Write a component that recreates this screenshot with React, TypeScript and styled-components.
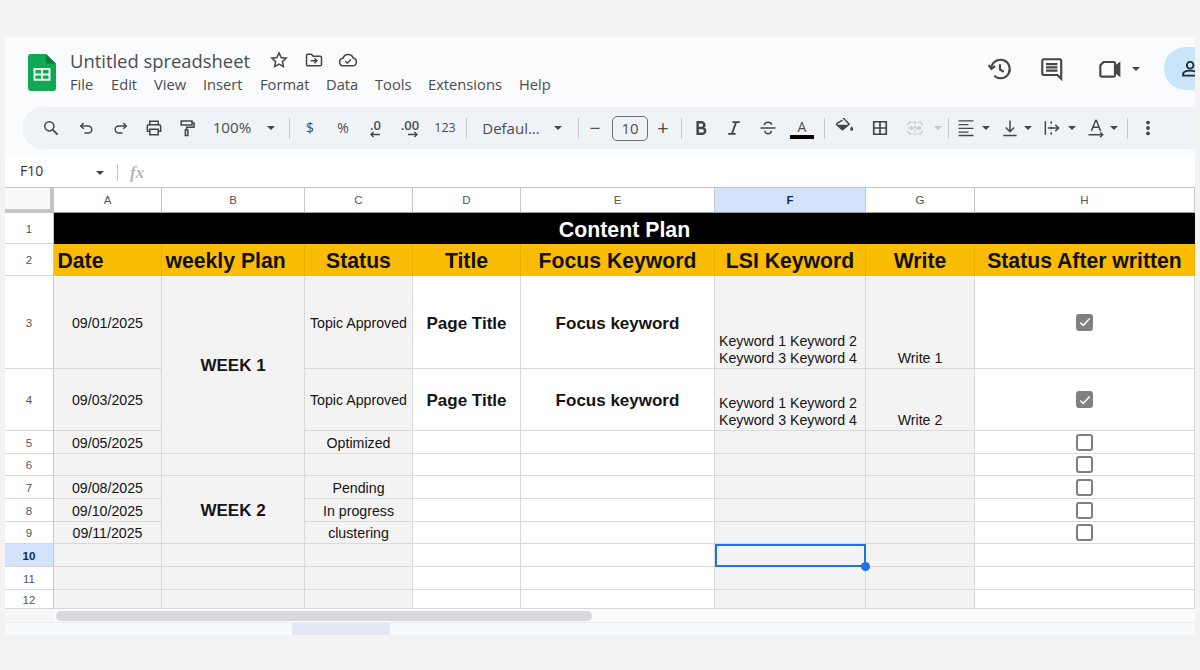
import React from "react";
import styled, { createGlobalStyle } from "styled-components";

const Global = createGlobalStyle`
  html, body { margin: 0; padding: 0; background: #f4f3f1; }
  body { width: 1200px; height: 670px; overflow: hidden; font-family: "Roboto", "Liberation Sans", sans-serif; }
`;

const Page = styled.div`
  box-sizing: border-box;
  width: 1200px;
  height: 670px;
  padding: 37px 5px 35px;
  background: #f4f3f1;
`;
const Window = styled.div`
  width: 1190px;
  height: 598px;
  display: flex;
  flex-direction: column;
  overflow: hidden;
  background: #fafbfd;
`;
const Header = styled.header`
  height: 70px;
  flex: none;
  display: flex;
  align-items: flex-start;
  padding-left: 23px;
  box-sizing: border-box;
`;
const Logo = styled.svg`
  width: 28px;
  height: 37px;
  margin-top: 17px;
  flex: none;
`;
const TitleBlock = styled.div`
  margin-left: 14px;
  padding-top: 11px;
  flex: 1;
`;
const TitleRow = styled.div`
  display: flex;
  align-items: center;
  height: 24px;
`;
const DocTitle = styled.span`
  font-family: "Open Sans", sans-serif;
  font-size: 18.4px;
  color: #4a4d51;
  width: 199px;
  white-space: nowrap;
`;
const TitleIcon = styled.svg`
  width: 20px;
  height: 20px;
  margin-right: 14.5px;
  fill: none;
  stroke: #444746;
  stroke-width: 1.8;
`;
const Menu = styled.nav`
  display: flex;
  height: 24px;
  align-items: center;
`;
const MenuItem = styled.span<{ $w: number }>`
  font-family: "Open Sans", sans-serif;
  font-size: 14.7px;
  color: #4a4d51;
  width: ${(p) => p.$w}px;
  flex: none;
`;
const RightIcons = styled.div`
  display: flex;
  align-items: center;
  height: 63px;
`;
const TopIcon = styled.svg<{ $mr: number }>`
  width: 26px;
  height: 26px;
  margin-right: ${(p) => p.$mr}px;
  fill: none;
  stroke: #444746;
  stroke-width: 2;
  flex: none;
`;
const Caret = styled.span<{ $light?: boolean }>`
  display: block;
  flex: none;
  width: 0;
  height: 0;
  border-left: 4.5px solid transparent;
  border-right: 4.5px solid transparent;
  border-top: 4.5px solid ${(p) => (p.$light ? "#c4c7c5" : "#444746")};
`;
const Avatar = styled.div`
  width: 31px;
  height: 43px;
  margin-left: 24.5px;
  border-radius: 22px 0 0 22px;
  background: #c9e5fa;
  flex: none;
  display: flex;
  align-items: center;
  padding-left: 17px;
  box-sizing: border-box;
  overflow: hidden;
`;
const AvatarIcon = styled.svg`
  width: 20px;
  height: 20px;
  flex: none;
  fill: none;
  stroke: #1f2a33;
  stroke-width: 2.2;
`;
const Toolbar = styled.div`
  margin-left: 17px;
  height: 42px;
  flex: none;
  display: flex;
  align-items: center;
  background: #eff3f8;
  border-radius: 21px 0 0 21px;
`;
const Slot = styled.div<{ $w: number; $ml: number }>`
  width: ${(p) => p.$w}px;
  margin-left: ${(p) => p.$ml}px;
  flex: none;
  display: flex;
  align-items: center;
  justify-content: center;
  height: 100%;
  color: #444746;
`;
const ToolIcon = styled.svg<{ $muted?: boolean }>`
  width: 20px;
  height: 20px;
  flex: none;
  fill: none;
  stroke: ${(p) => (p.$muted ? "#c4c7c5" : "#444746")};
  stroke-width: 1.8;
`;
const Divider = styled.span`
  width: 1px;
  flex: none;
  height: 21px;
  background: #c7cbd0;
`;
const ToolText = styled.span<{ $size?: number; $weight?: number }>`
  font-family: "Open Sans", sans-serif;
  font-size: ${(p) => p.$size ?? 15}px;
  font-weight: ${(p) => p.$weight ?? 400};
  color: #4a4d51;
  white-space: nowrap;
  line-height: 1;
`;
const SizeBox = styled.span`
  width: 36px;
  height: 25px;
  box-sizing: border-box;
  border: 1px solid #6f7377;
  border-radius: 5px;
  display: flex;
  align-items: center;
  justify-content: center;
  font-family: "Open Sans", sans-serif;
  font-size: 15px;
  color: #4a4d51;
`;
const DecimalStack = styled.div`
  display: flex;
  flex-direction: column;
  align-items: flex-end;
`;
const DecimalArrow = styled.svg`
  width: 12px;
  height: 7px;
  fill: none;
  stroke: #444746;
  stroke-width: 1.4;
  margin-top: -1px;
`;
const ColorStack = styled.div`
  display: flex;
  flex-direction: column;
  align-items: center;
  padding-top: 1px;
`;
const ColorLetter = styled.span`
  font-family: "Open Sans", sans-serif;
  font-size: 14px;
  font-weight: 400;
  line-height: 15px;
  color: #4a4d51;
`;
const ColorBar = styled.span`
  width: 24px;
  height: 4px;
  background: #000;
  margin-top: 1px;
`;
const FormulaBar = styled.div`
  margin-top: 8px;
  height: 31px;
  flex: none;
  display: flex;
  align-items: center;
  background: #fff;
  box-sizing: border-box;
  padding-left: 15px;
`;
const CellRef = styled.span`
  font-family: "Open Sans", sans-serif;
  font-size: 14px;
  color: #333;
  width: 76px;
  margin-top: -5px;
`;
const FxSep = styled.span`
  width: 1px;
  height: 17px;
  background: #c7c7c7;
  margin: 0 12px 0 13px;
`;
const Fx = styled.span`
  font-family: "Liberation Serif", serif;
  font-style: italic;
  font-size: 17px;
  font-weight: 700;
  color: #b5b7b9;
`;
const Sheet = styled.div`
  display: grid;
  grid-template-columns: 49px 108px 143px 108px 108px 194px 151px 109px 220px;
  grid-template-rows: 25px 31px 32px 93px 62px 23px 22px 23px 23px 22px 23px 23px 19px;
  flex: none;
  background: #fff;
  border-top: 1px solid #c7c7c7;
  margin-top: -1px;
`;
const Corner = styled.div`
  background: #f8f9fa;
  border-right: 4px solid #c4c4c4;
  border-bottom: 4px solid #c4c4c4;
`;
const ColHead = styled.div<{ $active?: boolean }>`
  display: flex;
  align-items: center;
  justify-content: center;
  font-family: "Liberation Sans", sans-serif;
  font-size: 11.5px;
  font-weight: ${(p) => (p.$active ? 700 : 400)};
  color: ${(p) => (p.$active ? "#0b2a52" : "#555")};
  background: ${(p) => (p.$active ? "#d3e3fd" : "#fff")};
  border-right: 1px solid #c7c7c7;
  border-bottom: 1px solid #9a9a9a;
`;
const RowHead = styled.div<{ $active?: boolean }>`
  display: flex;
  align-items: center;
  justify-content: center;
  padding-top: 1px;
  box-sizing: border-box;
  font-family: "Liberation Sans", sans-serif;
  font-size: 11.5px;
  font-weight: ${(p) => (p.$active ? 700 : 400)};
  color: ${(p) => (p.$active ? "#0b2a52" : "#555")};
  background: ${(p) => (p.$active ? "#d3e3fd" : "#fff")};
  border-right: 1px solid #c7c7c7;
  border-bottom: 1px solid #d6d6d6;
`;
const Banner = styled.div`
  grid-column: 2 / -1;
  background: #000;
  color: #fff;
  display: flex;
  align-items: center;
  justify-content: center;
  padding-top: 3px;
  box-sizing: border-box;
  font-family: "Liberation Sans", sans-serif;
  font-weight: 700;
  font-size: 21.3px;
`;
const HeadCell = styled.div<{ $left?: boolean }>`
  background: #fbbc04;
  color: #111;
  display: flex;
  align-items: center;
  justify-content: ${(p) => (p.$left ? "flex-start" : "center")};
  padding: 2px 0 0 ${(p) => (p.$left ? 3.5 : 0)}px;
  box-sizing: border-box;
  font-family: "Liberation Sans", sans-serif;
  font-weight: 700;
  font-size: 21.2px;
  white-space: nowrap;
  border-right: 1px solid #eab000;
`;
const Cell = styled.div<{ $grey?: boolean; $span?: number; $bold?: boolean; $bottom?: boolean; $left?: boolean; $selected?: boolean }>`
  position: relative;
  box-sizing: border-box;
  grid-row: ${(p) => (p.$span ? `span ${p.$span}` : "auto")};
  background: ${(p) => (p.$grey ? "#f3f3f3" : "#fff")};
  border-right: 1px solid #d9d9d9;
  border-bottom: 1px solid #d9d9d9;
  display: flex;
  align-items: ${(p) => (p.$bottom ? "flex-end" : "center")};
  justify-content: ${(p) => (p.$left ? "flex-start" : "center")};
  padding: ${(p) => (p.$bottom ? "0 0 1px" : "2px 0 0")};
  padding-left: ${(p) => (p.$left ? 4 : 0)}px;
  font-family: "Liberation Sans", sans-serif;
  font-size: ${(p) => (p.$bold ? 17 : 14.2)}px;
  font-weight: ${(p) => (p.$bold ? 700 : 400)};
  line-height: 17px;
  color: #151515;
  white-space: pre;
  ${(p) => (p.$selected ? "outline: 2px solid #1a73e8; outline-offset: -2px;" : "")}
`;
const Handle = styled.span`
  position: absolute;
  right: -5px;
  bottom: -5px;
  width: 9px;
  height: 9px;
  border-radius: 50%;
  background: #1a73e8;
  z-index: 2;
`;
const Box = styled.span<{ $checked?: boolean }>`
  box-sizing: border-box;
  width: 17px;
  height: 17px;
  margin-top: -2px;
  border-radius: 3px;
  border: 2px solid ${(p) => (p.$checked ? "#808080" : "#7f7f7f")};
  background: ${(p) => (p.$checked ? "#808080" : "#fff")};
  display: flex;
  align-items: center;
  justify-content: center;
`;
const CheckMark = styled.svg`
  width: 14px;
  height: 14px;
  flex: none;
  fill: none;
  stroke: #fff;
  stroke-width: 2.6;
`;
const ScrollRow = styled.div`
  height: 13px;
  flex: none;
  display: flex;
  background: #fbfbfb;
  border-bottom: 1px solid #eceef1;
`;
const ScrollCorner = styled.div`
  width: 49px;
  flex: none;
  background: #f6f6f6;
`;
const ScrollThumb = styled.div`
  width: 536px;
  height: 10px;
  margin: 2px 0 0 2px;
  border-radius: 5px;
  background: #d8d9db;
`;
const Tabs = styled.div`
  flex: 1;
  display: flex;
  background: #f8f9fb;
`;
const ActiveTab = styled.div`
  width: 98px;
  margin-left: 287px;
  background: #e2e9f5;
`;

const I = {
  search: <><circle cx="10" cy="10" r="5.5" /><path d="M14.2 14.2L20 20" strokeWidth="2.2" /></>,
  undo: <><path d="M8 6L4.5 9.5 8 13" /><path d="M5 9.5h8.5a4 4 0 0 1 0 8.5H9" /></>,
  redo: <><path d="M16 6l3.500 3.500L16 13" /><path d="M19 9.500h-8.500a4 4 0 0 0 0 8.500H15" /></>,
  print: <><path d="M7 8V4h10v4" /><path d="M7 16H4v-6a2 2 0 0 1 2-2h12a2 2 0 0 1 2 2v6h-3" /><path d="M7 13.500h10V20H7z" /></>,
  paint: <><path d="M5 3.500h13v5H5z" /><path d="M18 6h2.500v5H11.500v3.500" /><path d="M10 14.500h3V21h-3z" /></>,
  bold: <path d="M8 5h4.500a3.500 3.500 0 0 1 0 7H8zM8 12h5.500a3.500 3.500 0 0 1 0 7H8z" strokeWidth="3" />,
  italic: <path d="M10 5h9M5 19h9M14.500 5L9.500 19" strokeWidth="2.2" />,
  strike: <><path d="M3 12h18" /><path d="M7.500 8.500C8 6 10 5 12 5s4 1 4.500 3" /><path d="M8 15.500c.6 2.200 2.200 3.500 4 3.500s3.600-1 4-3.500" /></>,
  fill: <><path d="M9.500 -0.500L17 7.500 10 13.500a1.500 1.500 0 0 1-2 0L2.500 8.500a1.500 1.500 0 0 1 0-2L9 2.500" /><path d="M3 8h13l-6 5.500a1.500 1.500 0 0 1-2 0z" fill="#444746" stroke="none" /><path d="M20 10c1.200 1.800 1.800 2.600 1.800 3.500a1.800 1.800 0 0 1-3.600 0c0-.9.6-1.700 1.800-3.500z" fill="#444746" stroke="none" /></>,
  borders: <path d="M4.500 4.500h15v15h-15zM12 4.500v15M4.500 12h15" strokeWidth="2" />,
  merge: <><path d="M4 9V5h6M20 9V5h-6M4 15v4h6M20 15v4h-6" strokeDasharray="3 1.500" /><path d="M4 12h5l-2-2M9 12l-2 2M20 12h-5l2-2M15 12l2 2" /><path d="M12 4v16" strokeDasharray="3 2" /></>,
  align: <path d="M3 3.500h18M3 8h12M3 12.500h18M3 17h12M3 21h18" strokeWidth="1.600" />,
  valign: <><path d="M12 3v13M7 11.500l5 5 5-5" /><path d="M4 21h16" /></>,
  wrap: <><path d="M4 4v16M11 4v3M11 10.500v3M11 17v3" /><path d="M7 12h13M16 8l4 4-4 4" /></>,
  rotate: <><path d="M6.500 15.500L11.500 3h1L17.500 15.500M8.500 11h7" /><path d="M3 20h17M17 17l3 3-3 3" /></>,
  more: <><circle cx="12" cy="5.500" r="1.400" fill="#444746" /><circle cx="12" cy="12" r="1.400" fill="#444746" /><circle cx="12" cy="18.500" r="1.400" fill="#444746" /></>,
};

function Tool({ ml, icon, muted }: { ml: number; icon: React.ReactNode; muted?: boolean }) {
  return (
    <Slot $w={20} $ml={ml}>
      <ToolIcon viewBox="0 0 24 24" $muted={muted}>{icon}</ToolIcon>
    </Slot>
  );
}
const Sep = ({ ml }: { ml: number }) => <Slot $w={1} $ml={ml}><Divider /></Slot>;
const Down = ({ ml, light }: { ml: number; light?: boolean }) => <Slot $w={9} $ml={ml}><Caret $light={light} /></Slot>;
const Txt = ({ w, ml, children, size, weight }: { w: number; ml: number; children: React.ReactNode; size?: number; weight?: number }) => (
  <Slot $w={w} $ml={ml}><ToolText $size={size} $weight={weight}>{children}</ToolText></Slot>
);

const colNames = ["A", "B", "C", "D", "E", "F", "G", "H"];

type C = { t?: string; grey?: boolean; span?: number; bold?: boolean; bottom?: boolean; left?: boolean; box?: "on" | "off"; selected?: boolean };
const g = (t?: string, extra: Partial<C> = {}): C => ({ t, grey: true, ...extra });
const w = (t?: string, extra: Partial<C> = {}): C => ({ t, ...extra });
const kw = "Keyword 1 Keyword 2\nKeyword 3 Keyword 4";
const blankTail = (box?: "on" | "off", selected?: boolean): C[] => [w(), w(), g(undefined, { selected }), g(), w(undefined, { box })];

const rows: { n: number; cells: C[] }[] = [
  { n: 3, cells: [g("09/01/2025"), g("WEEK 1", { span: 3, bold: true }), g("Topic Approved"), w("Page Title", { bold: true }), w("Focus keyword", { bold: true }), g(kw, { bottom: true, left: true }), g("Write 1", { bottom: true }), w(undefined, { box: "on" })] },
  { n: 4, cells: [g("09/03/2025"), g("Topic Approved"), w("Page Title", { bold: true }), w("Focus keyword", { bold: true }), g(kw, { bottom: true, left: true }), g("Write 2", { bottom: true }), w(undefined, { box: "on" })] },
  { n: 5, cells: [g("09/05/2025"), g("Optimized"), ...blankTail("off")] },
  { n: 6, cells: [g(), g(), g(), ...blankTail("off")] },
  { n: 7, cells: [g("09/08/2025"), g("WEEK 2", { span: 3, bold: true }), g("Pending"), ...blankTail("off")] },
  { n: 8, cells: [g("09/10/2025"), g("In progress"), ...blankTail("off")] },
  { n: 9, cells: [g("09/11/2025"), g("clustering"), ...blankTail("off")] },
  { n: 10, cells: [g(), g(), g(), ...blankTail(undefined, true)] },
  { n: 11, cells: [g(), g(), g(), ...blankTail()] },
  { n: 12, cells: [g(), g(), g(), ...blankTail()] },
];

const heads: { t: string; left?: boolean }[] = [
  { t: "Date", left: true },
  { t: "weekly Plan", left: true },
  { t: "Status" },
  { t: "Title" },
  { t: "Focus Keyword" },
  { t: "LSI Keyword" },
  { t: "Write" },
  { t: "Status After written" },
];

const menu: [string, number][] = [["File", 41], ["Edit", 43], ["View", 49], ["Insert", 57], ["Format", 66], ["Data", 49], ["Tools", 53], ["Extensions", 91], ["Help", 40]];

export default function App() {
  return (
    <Page>
      <Global />
      <Window>
        <Header>
          <Logo viewBox="0 0 28 38" preserveAspectRatio="none">
            <path d="M2.500 0H18l10 10v25.500a2.500 2.500 0 0 1-2.500 2.500h-23A2.500 2.500 0 0 1 0 35.500v-33A2.500 2.500 0 0 1 2.500 0z" fill="#10a855" />
            <path d="M18 0l10 10H20a2 2 0 0 1-2-2z" fill="#0a7c41" />
            <path d="M6.500 15.500h15v11h-15zM14 15.500v11M6.500 21h15" fill="none" stroke="#e9f7ef" strokeWidth="2" />
          </Logo>
          <TitleBlock>
            <TitleRow>
              <DocTitle>Untitled spreadsheet</DocTitle>
              <TitleIcon viewBox="0 0 24 24"><path d="M12 3.500l2.600 5.600 6 .7-4.500 4.100 1.200 6L12 17l-5.300 2.900 1.200-6-4.500-4.100 6-.7z" /></TitleIcon>
              <TitleIcon viewBox="0 0 24 24"><path d="M3 6.500a1.500 1.500 0 0 1 1.500-1.500H9l2 2.500h8.500A1.500 1.500 0 0 1 21 9v8.500a1.500 1.500 0 0 1-1.500 1.500h-15A1.500 1.500 0 0 1 3 17.500z" /><path d="M8 13h7M12.500 10l3 3-3 3" /></TitleIcon>
              <TitleIcon viewBox="0 0 24 24"><path d="M6.500 19a4.500 4.500 0 0 1-.6-8.960A6.500 6.500 0 0 1 18.300 9.700 4.700 4.700 0 0 1 17.500 19z" /><path d="M8.800 13.500l2.400 2.400 4.200-4.400" /></TitleIcon>
            </TitleRow>
            <Menu>
              {menu.map(([m, width]) => <MenuItem key={m} $w={width}>{m}</MenuItem>)}
            </Menu>
          </TitleBlock>
          <RightIcons>
            <TopIcon viewBox="0 0 24 24" $mr={26}><path d="M4 12a8.500 8.500 0 1 1 2.700 6.200" /><path d="M1.500 8.500L4.100 12l3.400-2.800" /><path d="M12 7.500V12.500l3.500 2.200" /></TopIcon>
            <TopIcon viewBox="0 0 24 24" $mr={31}><path d="M20.500 21l-3.500-3.500H4.500A1.500 1.500 0 0 1 3 16V4.500A1.500 1.500 0 0 1 4.500 3h14.500A1.500 1.500 0 0 1 20.500 4.500z" /><path d="M6.500 7.500h10.500M6.500 10.500h10.500M6.500 13.500h10.500" /></TopIcon>
            <TopIcon viewBox="0 0 24 24" $mr={9.5}><path d="M7 5.500h9.500a1 1 0 0 1 1 1V18a1 1 0 0 1-1 1H5a1 1 0 0 1-1-1V8.500z" /><path d="M17.500 10l4-3v10.500l-4-3" fill="#444746" /></TopIcon>
            <Caret />
            <Avatar>
              <AvatarIcon viewBox="0 0 24 24"><circle cx="11" cy="7.500" r="4" /><path d="M2.500 20v-1.500c0-3 4-4.500 8.500-4.500s8.500 1.500 8.500 4.500V20z" /></AvatarIcon>
            </Avatar>
          </RightIcons>
        </Header>
        <Toolbar>
          <Tool ml={19} icon={I.search} />
          <Tool ml={16} icon={I.undo} />
          <Tool ml={13} icon={I.redo} />
          <Tool ml={14} icon={I.print} />
          <Tool ml={13} icon={I.paint} />
          <Txt w={40} ml={15} size={15.2}>100%</Txt>
          <Down ml={14.5} />
          <Sep ml={13} />
          <Txt w={10} ml={15.5} size={14}>$</Txt>
          <Txt w={14} ml={21} size={14}>%</Txt>
          <Slot $w={24} $ml={13}>
            <DecimalStack>
              <ToolText $size={13} $weight={600}>.0</ToolText>
              <DecimalArrow viewBox="0 0 12 7"><path d="M11 3.500H2M4.500 1L2 3.500 4.500 6" /></DecimalArrow>
            </DecimalStack>
          </Slot>
          <Slot $w={30} $ml={8}>
            <DecimalStack>
              <ToolText $size={13} $weight={600}>.00</ToolText>
              <DecimalArrow viewBox="0 0 12 7"><path d="M1 3.500h9M7.500 1L10 3.500 7.500 6" /></DecimalArrow>
            </DecimalStack>
          </Slot>
          <Txt w={24} ml={8} size={12.5}>123</Txt>
          <Sep ml={8.5} />
          <Txt w={58} ml={15.5}>Defaul...</Txt>
          <Down ml={13.5} />
          <Sep ml={15} />
          <Txt w={12} ml={10.5} size={19}>−</Txt>
          <Slot $w={36} $ml={11}><SizeBox>10</SizeBox></Slot>
          <Txt w={14} ml={8} size={20}>+</Txt>
          <Sep ml={10.5} />
          <Tool ml={9.5} icon={I.bold} />
          <Tool ml={13} icon={I.italic} />
          <Tool ml={14} icon={I.strike} />
          <Slot $w={24} $ml={12}>
            <ColorStack><ColorLetter>A</ColorLetter><ColorBar /></ColorStack>
          </Slot>
          <Sep ml={9.5} />
          <Tool ml={10.5} icon={I.fill} />
          <Tool ml={15} icon={I.borders} />
          <Tool ml={15} icon={I.merge} muted />
          <Down ml={8.5} light />
          <Sep ml={5} />
          <Tool ml={7.5} icon={I.align} />
          <Down ml={5.5} />
          <Tool ml={9.5} icon={I.valign} />
          <Down ml={3.5} />
          <Tool ml={9.5} icon={I.wrap} />
          <Down ml={5.5} />
          <Tool ml={9.5} icon={I.rotate} />
          <Down ml={3.5} />
          <Sep ml={8} />
          <Tool ml={10.5} icon={I.more} />
        </Toolbar>
        <FormulaBar>
          <CellRef>F10</CellRef>
          <Caret />
          <FxSep />
          <Fx>fx</Fx>
        </FormulaBar>
        <Sheet>
          <Corner />
          {colNames.map((c) => <ColHead key={c} $active={c === "F"}>{c}</ColHead>)}
          <RowHead>1</RowHead>
          <Banner>Content Plan</Banner>
          <RowHead>2</RowHead>
          {heads.map((h) => <HeadCell key={h.t} $left={h.left}>{h.t}</HeadCell>)}
          {rows.map((r) => (
            <React.Fragment key={r.n}>
              <RowHead $active={r.n === 10}>{r.n}</RowHead>
              {r.cells.map((c, i) => (
                <Cell key={i} $grey={c.grey} $span={c.span} $bold={c.bold} $bottom={c.bottom} $left={c.left} $selected={c.selected}>
                  {c.t}
                  {c.box && (
                    <Box $checked={c.box === "on"}>
                      {c.box === "on" && <CheckMark viewBox="0 0 24 24"><path d="M4 13l5 5L20 6" /></CheckMark>}
                    </Box>
                  )}
                  {c.selected && <Handle />}
                </Cell>
              ))}
            </React.Fragment>
          ))}
        </Sheet>
        <ScrollRow>
          <ScrollCorner />
          <ScrollThumb />
        </ScrollRow>
        <Tabs><ActiveTab /></Tabs>
      </Window>
    </Page>
  );
}
